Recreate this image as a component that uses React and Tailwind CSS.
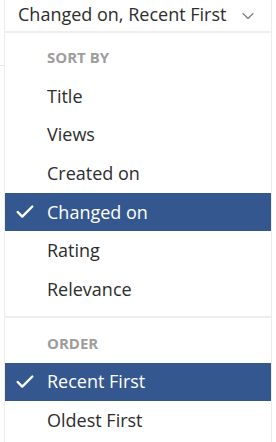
import React from 'react'
import { Check, ChevronDown } from 'lucide-react'

const sortBy = ['Title', 'Views', 'Created on', 'Changed on', 'Rating', 'Relevance']
const order = ['Recent First', 'Oldest First']

function Item({ label, active }) {
  return (
    <div
      className={
        'flex items-center h-[38.6px] text-[18px] ' +
        (active ? 'bg-[#35578f] text-white' : 'text-[#2d2d2d]')
      }
    >
      <span className="w-[42px] pl-[9px] flex items-center">
        {active && <Check className="h-[22px] w-[22px]" strokeWidth={2.6} />}
      </span>
      <span>{label}</span>
    </div>
  )
}

export default function App() {
  return (
    <div
      className="relative w-[276px] h-[442px] bg-white overflow-hidden"
      style={{ fontFamily: '"Open Sans", sans-serif' }}
    >
      {/* bits of the page behind the menu */}
      <div className="absolute top-[65px] left-0 w-[4px] h-px bg-[#e4e4e4]" />

      <div className="ml-[4px] w-[268px] h-full border-l border-r border-[#ececec]">
        {/* Current selection */}
        <div className="h-[33px] border-b-2 border-[#eeeeee] flex items-center pl-[13px] pr-[13px]">
          <span className="text-[18px] text-[#2d2d2d] flex-1 -mt-[2px]">Changed on, Recent First</span>
          <ChevronDown className="h-[20px] w-[20px] text-[#7a7a7a]" strokeWidth={1.4} />
        </div>

        {/* Sort by */}
        <div className="pb-[7px] border-b-2 border-[#eeeeee]">
          <div className="pt-[14px] pb-[10px] pl-[42px] leading-[20px] text-[15px] font-bold text-[#9d9d9d]">
            SORT BY
          </div>
          {sortBy.map((s) => (
            <Item key={s} label={s} active={s === 'Changed on'} />
          ))}
        </div>

        {/* Order */}
        <div>
          <div className="pt-[15px] pb-[10px] pl-[42px] leading-[20px] text-[15px] font-bold text-[#9d9d9d]">
            ORDER
          </div>
          {order.map((s) => (
            <Item key={s} label={s} active={s === 'Recent First'} />
          ))}
        </div>
      </div>
    </div>
  )
}
